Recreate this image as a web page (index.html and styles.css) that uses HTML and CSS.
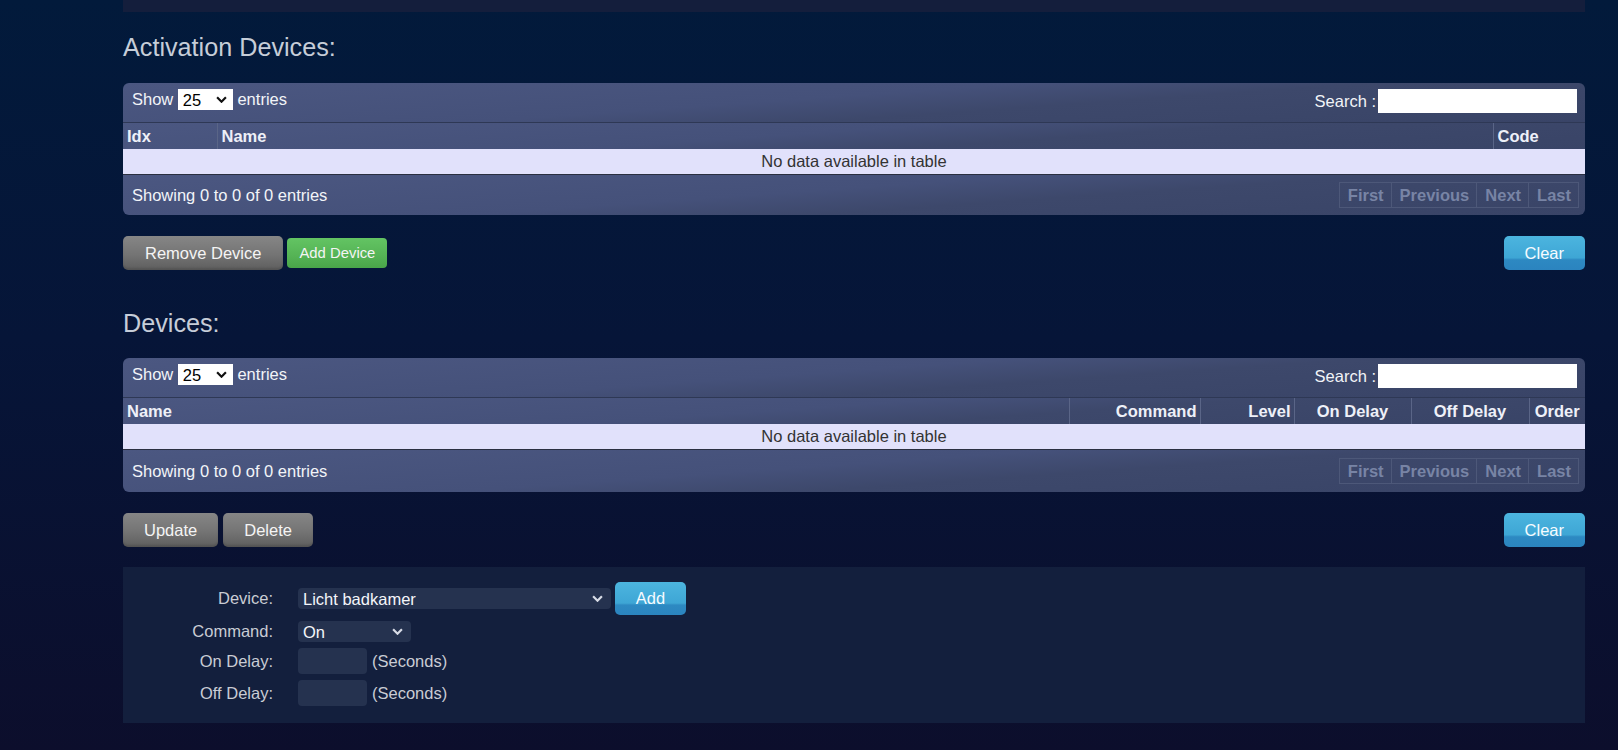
FILE: index.html
```html
<!DOCTYPE html>
<html>
<head>
<meta charset="utf-8">
<title>Scene Devices</title>
<link rel="stylesheet" href="styles.css">
</head>
<body>
<div class="page">
  <div class="topbar"></div>

  <h2 class="section-title">Activation Devices:</h2>
  <div class="dt">
    <div class="dt-toolbar ui-head">
      <div class="dt-length">Show <span class="sel-wrap sel-light"><select class="sel"><option>25</option></select><svg class="chev" viewBox="0 0 10 6" width="11" height="7"><path d="M1 1 L5 5 L9 1" fill="none" stroke="#111" stroke-width="2"/></svg></span> entries</div>
      <div class="dt-search">Search :<input type="text" class="search-input"></div>
    </div>
    <table class="dt-table">
      <colgroup><col style="width:94px"><col><col style="width:92px"></colgroup>
      <thead class="ui-head"><tr><th>Idx</th><th>Name</th><th>Code</th></tr></thead>
      <tbody><tr><td colspan="3" class="empty">No data available in table</td></tr></tbody>
    </table>
    <div class="dt-footer ui-head">
      <div class="dt-info">Showing 0 to 0 of 0 entries</div>
      <div class="dt-paging"><span>First</span><span>Previous</span><span>Next</span><span>Last</span></div>
    </div>
  </div>
  <div class="btn-row">
    <div class="btn-group">
      <button class="btn btn-gray btn-wide">Remove Device</button>
      <button class="btn btn-green">Add Device</button>
    </div>
    <button class="btn btn-blue">Clear</button>
  </div>

  <h2 class="section-title second">Devices:</h2>
  <div class="dt dt-second">
    <div class="dt-toolbar ui-head">
      <div class="dt-length">Show <span class="sel-wrap sel-light"><select class="sel"><option>25</option></select><svg class="chev" viewBox="0 0 10 6" width="11" height="7"><path d="M1 1 L5 5 L9 1" fill="none" stroke="#111" stroke-width="2"/></svg></span> entries</div>
      <div class="dt-search">Search :<input type="text" class="search-input"></div>
    </div>
    <table class="dt-table">
      <colgroup><col><col style="width:131px"><col style="width:94px"><col style="width:117px"><col style="width:118px"><col style="width:56px"></colgroup>
      <thead class="ui-head"><tr><th>Name</th><th class="r">Command</th><th class="r">Level</th><th class="c">On Delay</th><th class="c">Off Delay</th><th class="c">Order</th></tr></thead>
      <tbody><tr><td colspan="6" class="empty">No data available in table</td></tr></tbody>
    </table>
    <div class="dt-footer ui-head">
      <div class="dt-info">Showing 0 to 0 of 0 entries</div>
      <div class="dt-paging"><span>First</span><span>Previous</span><span>Next</span><span>Last</span></div>
    </div>
  </div>
  <div class="btn-row row2">
    <div class="btn-group g5">
      <button class="btn btn-gray">Update</button>
      <button class="btn btn-gray">Delete</button>
    </div>
    <button class="btn btn-blue">Clear</button>
  </div>

  <div class="edit-panel">
    <div class="form-grid">
      <div class="lbl">Device:</div>
      <div class="field">
        <span class="sel-wrap sel-dark dev"><select class="sel"><option>Licht badkamer</option></select><svg class="chev" viewBox="0 0 10 6" width="11" height="7"><path d="M1 1 L5 5 L9 1" fill="none" stroke="#d8dce6" stroke-width="2"/></svg></span>
        <button class="btn btn-blue btn-add">Add</button>
      </div>
      <div class="lbl">Command:</div>
      <div class="field">
        <span class="sel-wrap sel-dark cmd"><select class="sel"><option>On</option></select><svg class="chev" viewBox="0 0 10 6" width="11" height="7"><path d="M1 1 L5 5 L9 1" fill="none" stroke="#d8dce6" stroke-width="2"/></svg></span>
      </div>
      <div class="lbl">On Delay:</div>
      <div class="field"><input type="text" class="delay"><span class="unit">(Seconds)</span></div>
      <div class="lbl">Off Delay:</div>
      <div class="field"><input type="text" class="delay"><span class="unit">(Seconds)</span></div>
    </div>
  </div>
</div>
</body>
</html>
```
FILE: styles.css
```css
html {
  height: 100%;
  background: linear-gradient(to bottom, #021a3b 0%, #061538 45%, #0c0e2c 100%);
}
body {
  margin: 0;
  min-height: 100%;
  font-family: "Liberation Sans", Arial, sans-serif;
  font-size: 16.5px;
  color: #fff;
  overflow: hidden;
}
.page {
  width: 1462px;
  margin-left: 123px;
}
.topbar {
  height: 12px;
  background: #141e3c;
}
.section-title {
  margin: 21px 0 22px;
  font-size: 25.2px;
  line-height: 28px;
  font-weight: normal;
  color: #c6cdd8;
}
.section-title.second {
  margin-top: 39px;
  margin-bottom: 21px;
}

/* data table */
.dt {
  border-radius: 6px;
  overflow: hidden;
}
.ui-head {
  background: linear-gradient(176deg, #4b5781 0%, #45517a 45%, #3d486b 62%, #394467 100%);
}
.dt-toolbar {
  height: 39px;
  box-sizing: border-box;
  padding: 6px 8px 0 9px;
  display: flex;
  justify-content: space-between;
  align-items: flex-start;
  color: #f2f4f8;
}
.dt-length {
  display: flex;
  align-items: center;
  height: 21px;
  white-space: pre;
}
.sel-wrap {
  position: relative;
  display: inline-block;
}
.sel {
  appearance: none;
  -webkit-appearance: none;
  border: none;
  outline: none;
  margin: 0;
  font-family: inherit;
  font-size: 16.5px;
  height: 21px;
  display: block;
  box-sizing: border-box;
}
.chev {
  position: absolute;
  top: 7px;
  pointer-events: none;
}
.sel-light .sel {
  width: 55px;
  background: #fff;
  color: #000;
  padding: 0 0 0 5px;
  border-radius: 0;
}
.sel-light .chev {
  right: 6px;
}
.dt-search {
  display: flex;
  align-items: center;
  height: 24px;
}
.search-input {
  width: 199px;
  height: 24px;
  box-sizing: border-box;
  border: none;
  margin: 0 0 0 2px;
  background: #fff;
  padding: 0 4px;
}

.dt-table {
  width: 100%;
  table-layout: fixed;
  border-collapse: collapse;
  border-spacing: 0;
}
.dt-table th {
  height: 26px;
  padding: 0 4px;
  border-top: 1px solid #2e3855;
  border-left: 1px solid #5a6587;
  text-align: left;
  font-weight: bold;
  color: #eef0f8;
  line-height: 19px;
  white-space: nowrap;
  overflow: hidden;
}
.dt-table th:first-child {
  border-left: none;
}
.dt-table th.r { text-align: right; padding-right: 3px; }
.dt-table th.c { text-align: center; }
.dt-table td.empty {
  height: 25px;
  padding: 0;
  background: #e1e1fb;
  color: #333;
  text-align: center;
  border-bottom: 1px solid #2a2f40;
  line-height: 19px;
}

.dt-footer {
  height: 40px;
  box-sizing: border-box;
  padding: 0 6px 0 9px;
  display: flex;
  justify-content: space-between;
  align-items: center;
  color: #f2f4f8;
}
.dt-second .dt-footer {
  height: 42px;
}
.dt-info {
  padding-top: 1px;
}
.dt-paging {
  display: flex;
}
.dt-paging span {
  height: 26px;
  box-sizing: border-box;
  line-height: 24px;
  padding: 0 7px 0 8px;
  border: 1px solid #4d5879;
  margin-left: -1px;
  font-weight: bold;
  color: #7884a5;
}

/* buttons */
.btn-row {
  margin-top: 21px;
  display: flex;
  justify-content: space-between;
  align-items: center;
}
.btn-row.row2 {
  margin-top: 21px;
}
.btn-group {
  display: flex;
  align-items: center;
  gap: 4px;
}
.btn-group.g5 {
  gap: 5px;
}
.btn {
  font-family: inherit;
  font-size: 16.5px;
  height: 34px;
  padding: 0 21px;
  border: none;
  border-radius: 5px;
  color: #f4f4f4;
  margin: 0;
  cursor: pointer;
}
.btn-wide {
  padding: 0 22px;
}
.btn-gray {
  background: linear-gradient(to bottom, #868686 0%, #747474 55%, #5e5e5e 100%);
  box-shadow: inset 0 -2px 2px rgba(0,0,0,0.12);
}
.btn-green {
  height: 30px;
  padding: 0 12px;
  font-size: 14.85px;
  border-radius: 4px;
  background: linear-gradient(to bottom, #63c463 0%, #55b355 60%, #49a549 100%);
}
.btn-blue {
  background: linear-gradient(to bottom, #4cb5df 0%, #3ea6d5 64%, #2d89c2 70%, #2b84bf 100%);
  color: #f6fbff;
}

/* edit panel */
.edit-panel {
  margin-top: 20px;
  background: #131f3d;
  padding: 15px 0 17px;
}
.form-grid {
  display: grid;
  grid-template-columns: 150px 1fr;
  column-gap: 25px;
  row-gap: 6px;
  align-items: center;
}
.lbl {
  text-align: right;
  color: #c9ccd4;
}
.field {
  display: flex;
  align-items: center;
}
.sel-dark .sel {
  background: #25324f;
  color: #f4f6fa;
  padding: 0 0 0 5px;
  border-radius: 4px;
}
.sel-dark.dev .sel { width: 313px; }
.sel-dark.cmd .sel { width: 113px; }
.sel-dark .chev { right: 8px; }
.btn-add {
  margin-left: 4px;
  height: 33px;
  width: 71px;
  padding: 0;
}
.delay {
  width: 69px;
  height: 26px;
  box-sizing: border-box;
  border: none;
  border-radius: 4px;
  background: #25324f;
  margin: 0;
  color: #fff;
}
.unit {
  margin-left: 5px;
  color: #c9ccd4;
}
```
